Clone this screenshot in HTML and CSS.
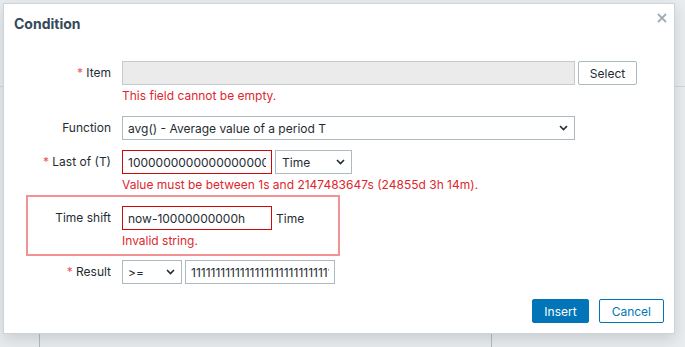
FILE: index.html
```html
<!DOCTYPE html>
<html>
<head>
<meta charset="utf-8">
<title>Condition</title>
<link rel="stylesheet" href="styles.css">
</head>
<body>
<div class="dialog">
  <div class="dlg-head">
    <h2 class="dlg-title">Condition</h2>
    <svg class="dlg-close" width="10" height="10" viewBox="0 0 10 10"><path d="M1 1L9 9M9 1L1 9" stroke="#a3acb3" stroke-width="1.8"/></svg>
  </div>
  <div class="form">
    <div class="row">
      <div class="lbl"><span class="req">*</span> Item</div>
      <div class="fld">
        <div class="line"><input class="inp inp-item" readonly value=""><button class="btn-alt">Select</button></div>
        <div class="err">This field cannot be empty.</div>
      </div>
    </div>
    <div class="row">
      <div class="lbl">Function</div>
      <div class="fld">
        <div class="line">
          <div class="sel sel-func"><span>avg() - Average value of a period T</span><svg width="9" height="6" viewBox="0 0 9 6"><path d="M1 1L4.5 4.5L8 1" fill="none" stroke="#1f2c33" stroke-width="1.6"/></svg></div>
        </div>
      </div>
    </div>
    <div class="row">
      <div class="lbl"><span class="req">*</span> Last of (T)</div>
      <div class="fld">
        <div class="line">
          <input class="inp inp-short inp-bad" value="10000000000000000000000">
          <div class="sel sel-time"><span>Time</span><svg width="9" height="6" viewBox="0 0 9 6"><path d="M1 1L4.5 4.5L8 1" fill="none" stroke="#1f2c33" stroke-width="1.6"/></svg></div>
        </div>
        <div class="err">Value must be between 1s and 2147483647s (24855d 3h 14m).</div>
      </div>
    </div>
    <div class="row row-shift">
      <div class="lbl">Time shift</div>
      <div class="fld">
        <div class="line">
          <input class="inp inp-short inp-bad" value="now-10000000000h">
          <span class="unit">Time</span>
        </div>
        <div class="err">Invalid string.</div>
      </div>
    </div>
    <div class="row row-result">
      <div class="lbl"><span class="req">*</span> Result</div>
      <div class="fld">
        <div class="line">
          <div class="sel sel-op"><span>&gt;=</span><svg width="9" height="6" viewBox="0 0 9 6"><path d="M1 1L4.5 4.5L8 1" fill="none" stroke="#1f2c33" stroke-width="1.6"/></svg></div>
          <input class="inp inp-short" value="1111111111111111111111111111111111111">
        </div>
      </div>
    </div>
  </div>
  <div class="dlg-foot">
    <button class="btn">Insert</button>
    <button class="btn btn-ghost">Cancel</button>
  </div>
</div>
</body>
</html>
```
FILE: styles.css
```css
* { box-sizing: border-box; }
html, body { margin: 0; height: 100%; }
body {
  font-family: Inter, "Liberation Sans", Arial, sans-serif;
  font-size: 12px;
  color: #1f2c33;
  overflow: hidden;
  background:
    linear-gradient(#d3d8dc, #d3d8dc) 675px 86px / 10px 1px no-repeat,
    linear-gradient(#d3d8dc, #d3d8dc) 0 86px / 3px 1px no-repeat,
    linear-gradient(#b3bbc0, #b3bbc0) 39px 333px / 1px 14px no-repeat,
    linear-gradient(#b3bbc0, #b3bbc0) 491px 333px / 1px 14px no-repeat,
    #eaedef;
}
.dialog {
  position: absolute;
  left: 3px;
  top: 3px;
  width: 672px;
  height: 331px;
  background: #fff;
  border: 1px solid #cdd3d7;
  box-shadow: 0 5px 14px rgba(40, 55, 65, 0.18);
  display: flex;
  flex-direction: column;
}
.dlg-head {
  display: flex;
  justify-content: space-between;
  align-items: flex-start;
  padding: 11px 7px 0 10px;
}
.dlg-title {
  margin: 0;
  font-size: 14px;
  line-height: 18px;
  font-weight: 700;
  color: #34495a;
}
.dlg-close { display: block; margin-top: -2px; }
.form {
  margin-top: 28px;
  padding-left: 24px;
  display: flex;
  flex-direction: column;
}
.row {
  display: grid;
  grid-template-columns: 83px auto;
  column-gap: 11px;
  justify-content: start;
}
.row + .row { margin-top: 10px; }
.lbl {
  text-align: right;
  line-height: 24px;
  white-space: nowrap;
}
.req { color: #e45959; }
.line {
  display: flex;
  align-items: center;
  gap: 3px;
  height: 24px;
}
.inp {
  font: inherit;
  color: #1f2c33;
  height: 24px;
  margin: 0;
  padding: 0 5px;
  border: 1px solid #acbbc2;
  border-radius: 0;
  background: #fff;
  outline: none;
}
.inp-item {
  width: 453px;
  background: #ebebeb;
  border-color: #c3cbd0;
}
.inp-short { width: 150px; }
.inp-bad { border-color: #cc0a0a; }
.sel {
  display: flex;
  align-items: center;
  justify-content: space-between;
  height: 24px;
  border: 1px solid #acbbc2;
  background: #fff;
  padding: 0 6px 0 5px;
}
.sel svg { display: block; }
.sel-func { width: 453px; }
.sel-time { width: 77px; padding-left: 6px; }
.sel-op { width: 60px; }
.unit { margin-left: 1px; }
.err {
  color: #e0262d;
  line-height: 14px;
  margin: 4px 0 3px;
  white-space: nowrap;
}
.btn-alt {
  font: inherit;
  width: 59px;
  height: 24px;
  margin: 0;
  padding: 0;
  border: 1px solid #acbbc2;
  border-radius: 2px;
  background: #fff;
  color: #1f2c33;
}
.row.row-shift {
  margin-top: 0;
  margin-left: -2px;
  width: 314px;
  border: 2px solid #f19393;
  padding: 9px 0 3px;
}
.row.row-result { margin-top: 4px; }
.dlg-foot {
  display: flex;
  justify-content: flex-end;
  gap: 10px;
  margin-top: 15px;
  padding-right: 10px;
}
.btn {
  font: inherit;
  height: 24px;
  margin: 0;
  padding: 0 11px;
  border: 1px solid #0275b8;
  border-radius: 2px;
  background: #0275b8;
  color: #fff;
}
.btn-ghost {
  padding: 0 12px;
  background: #fff;
  color: #0275b8;
}
```
